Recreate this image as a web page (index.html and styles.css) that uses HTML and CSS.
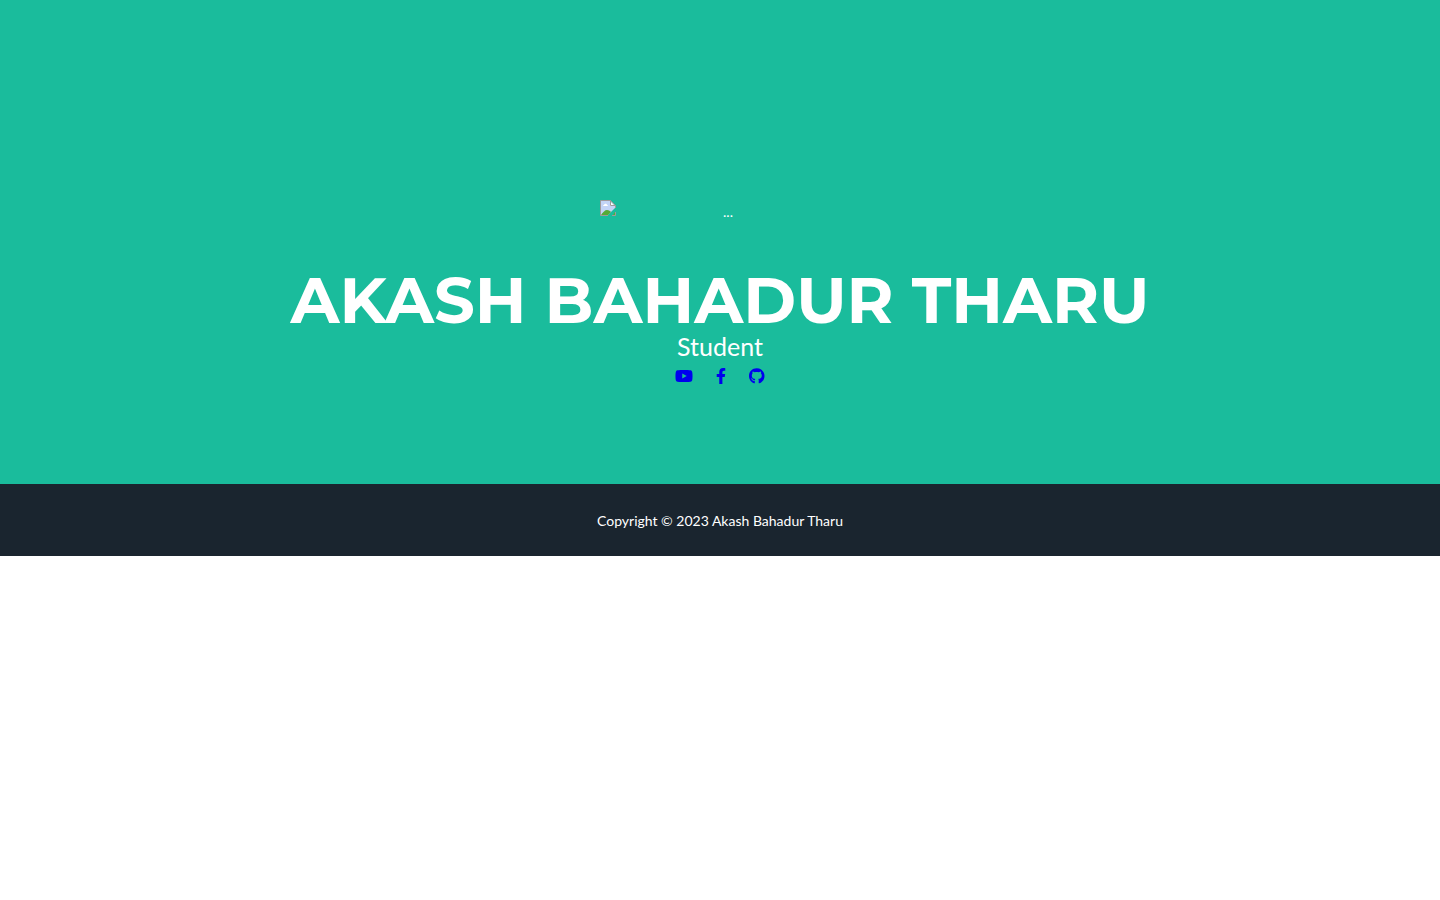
FILE: index.html
```html
<!DOCTYPE html>
<html lang="en">
<head>
<meta charset="utf-8">
<meta name="viewport" content="width=device-width, initial-scale=1">
<title>Akash Bahadur Tharu</title>
<link rel="stylesheet" href="styles.css">
</head>
<body>
<header class="masthead">
  <div class="avatar">
    <svg class="avatar-icon" viewBox="0 0 16 16" aria-hidden="true">
      <path fill="#c3d4f6" d="M1 1h9l5 5v2L8 15H1z"/>
      <path fill="#fff" d="M10 1l5 5h-5zM3 6c0-1 1-1 1-1 1-2 3-1 3 0 1 0 1 1 1 1z"/>
      <path fill="#56aa36" d="M1 15c2-3 4-5 6-5s3 1 4 2l-3 3zM13 15l2-3v3z"/>
      <path fill="none" stroke="#a09a9a" d="M8 15.500H.5V.5h10l5 5V8M10.500.5v5h5M12 15.500h3.500V12"/>
    </svg>
    <span class="avatar-alt">...</span>
  </div>
  <h1 class="name">Akash Bahadur Tharu</h1>
  <p class="role">Student</p>
  <nav class="social" aria-label="Social links">
    <a href="#" aria-label="YouTube"><svg class="icon" viewBox="0 0 576 512"><path d="M549.655 124.083c-6.281-23.650-24.787-42.276-48.284-48.597C458.781 64 288 64 288 64S117.220 64 74.629 75.486c-23.497 6.322-42.003 24.947-48.284 48.597-11.412 42.867-11.412 132.305-11.412 132.305s0 89.438 11.412 132.305c6.281 23.650 24.787 41.500 48.284 47.821C117.220 448 288 448 288 448s170.780 0 213.371-11.486c23.497-6.321 42.003-24.171 48.284-47.821 11.412-42.867 11.412-132.305 11.412-132.305s0-89.438-11.412-132.305zm-317.510 213.508V175.185l142.739 81.205-142.739 81.201z"/></svg></a>
    <a href="#" aria-label="Facebook"><svg class="icon" viewBox="0 0 320 512"><path d="M279.140 288l14.220-92.660h-88.910v-60.130c0-25.350 12.420-50.060 52.240-50.060h40.420V6.260S260.430 0 225.360 0c-73.220 0-121.080 44.380-121.080 124.720v70.620H22.890V288h81.390v224h100.170V288z"/></svg></a>
    <a href="#" aria-label="GitHub"><svg class="icon" viewBox="0 0 496 512"><path d="M165.900 397.400c0 2-2.300 3.600-5.200 3.600-3.300.3-5.600-1.300-5.600-3.600 0-2 2.300-3.600 5.200-3.600 3-.3 5.600 1.300 5.600 3.600zm-31.100-4.500c-.7 2 1.300 4.300 4.300 4.900 2.600 1 5.600 0 6.200-2s-1.300-4.300-4.300-5.200c-2.600-.7-5.500.3-6.200 2.300zm44.200-1.700c-2.900.7-4.900 2.600-4.600 4.900.3 2 2.900 3.300 5.900 2.600 2.900-.7 4.900-2.600 4.600-4.600-.3-1.900-3-3.200-5.900-2.900zM244.800 8C106.100 8 0 113.300 0 252c0 110.900 69.800 205.800 169.500 239.200 12.800 2.300 17.300-5.600 17.300-12.100 0-6.200-.3-40.400-.3-61.400 0 0-70 15-84.700-29.800 0 0-11.400-29.100-27.800-36.600 0 0-22.900-15.700 1.600-15.400 0 0 24.900 2 38.600 25.800 21.900 38.600 58.600 27.500 72.900 20.900 2.300-16 8.800-27.100 16-33.700-55.900-6.200-112.300-14.300-112.300-110.500 0-27.500 7.600-41.300 23.600-58.900-2.600-6.500-11.100-33.300 2.600-67.900 20.900-6.500 69 27 69 27 20-5.600 41.500-8.500 62.800-8.500s42.800 2.900 62.800 8.500c0 0 48.100-33.600 69-27 13.700 34.700 5.200 61.400 2.600 67.900 16 17.700 25.800 31.500 25.800 58.900 0 96.500-58.900 104.200-114.800 110.500 9.200 7.900 17 22.900 17 46.400 0 33.700-.3 75.400-.3 83.600 0 6.500 4.600 14.400 17.300 12.100C428.200 457.800 496 362.900 496 252 496 113.300 383.500 8 244.800 8z"/></svg></a>
  </nav>
</header>
<footer class="copyright"><small class="copyright-text">Copyright © 2023 Akash Bahadur Tharu</small></footer>
</body>
</html>
```
FILE: styles.css
```css
body {
  margin: 0;
  font-family: Lato, sans-serif;
  font-size: 16px;
  line-height: 24px;
  background: #fff;
}

.masthead {
  display: flex;
  flex-direction: column;
  align-items: center;
  padding: 200px 24px 96px;
  background: #1abc9c;
  color: #fff;
  text-align: center;
}

.avatar {
  display: flex;
  width: 240px;
  max-width: 100%;
  margin-bottom: 44px;
}

.avatar-icon {
  width: 16px;
  height: 16px;
}

.avatar-alt {
  flex: 1;
  font-size: 14px;
}

.name {
  margin: 0;
  font-family: Montserrat, sans-serif;
  font-size: 64px;
  font-weight: 700;
  line-height: 64px;
  text-transform: uppercase;
}

.role {
  margin: 0 0 4px;
  font-size: 25px;
  line-height: 28px;
}

.social {
  display: flex;
  gap: 23px;
  height: 24px;
  align-items: center;
}

.social a {
  display: flex;
  color: #0000ee;
}

.icon {
  height: 16px;
  fill: currentColor;
}

.copyright {
  padding: 25px 24px 23px;
  background: #1a252f;
  color: #fff;
  text-align: center;
}

.copyright-text {
  display: block;
  font-size: 14px;
}
```
